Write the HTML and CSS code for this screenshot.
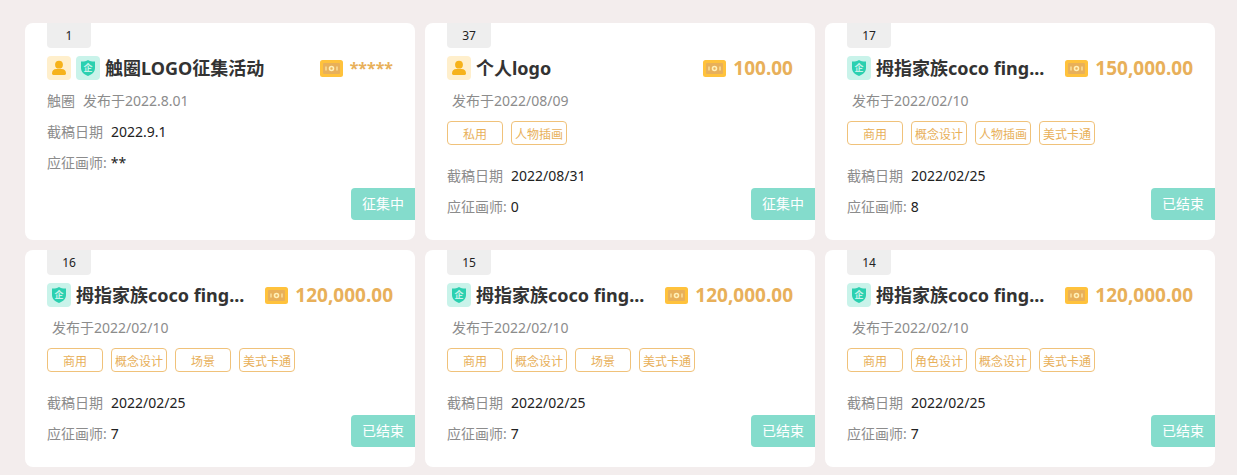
FILE: index.html
```html
<!DOCTYPE html>
<html lang="zh-CN">
<head>
    <meta charset="UTF-8">
    <meta name="viewport" content="width=device-width, initial-scale=1.0">
    <title>征集活动</title>
    <link rel="stylesheet" href="styles.css">
</head>
<body>
    <!-- shared icons -->
    <svg class="sprite" aria-hidden="true">
        <symbol id="icon-person" viewBox="0 0 24 24">
            <rect width="24" height="24" rx="4" fill="#ffefcc"/>
            <circle cx="12" cy="8.7" r="3.9" fill="#f6b21b"/>
            <path d="M5 17.6c0-3 1.6-4.6 4.4-4.6h5.2c2.8 0 4.4 1.6 4.4 4.6 0 .9-.5 1.4-1.4 1.4H6.4c-.9 0-1.4-.5-1.4-1.4z" fill="#f6b21b"/>
        </symbol>
        <symbol id="icon-shield" viewBox="0 0 24 24">
            <rect width="24" height="24" rx="4" fill="#c9f3ea"/>
            <path d="M12 4c2 1.3 4.4 1.6 7 1.5V12c0 3.600-2.600 6.400-7 8-4.400-1.600-7-4.400-7-8V5.500C7.600 5.600 10 5.300 12 4z" fill="#2bd0b0"/>
        </symbol>
        <symbol id="icon-money" viewBox="0 0 23 17">
            <rect width="23" height="17" rx="2.5" fill="#ffc23c"/>
            <rect x="3" y="3" width="17" height="11" rx="1" fill="#e8b05a"/>
            <circle cx="11.5" cy="8.5" r="2" fill="none" stroke="#fff0b8" stroke-width="1.600"/>
            <path d="M6 6.500v4M17 6.500v4" stroke="#fbe3a0" stroke-width="1.400"/>
        </symbol>
    </svg>

    <main class="list">
        <article class="card">
            <span class="number">1</span>
            <div class="head">
                <svg class="icon"><use href="#icon-person"/></svg>
                <svg class="icon"><use href="#icon-shield"/><text x="12" y="15">企</text></svg>
                <h3 class="title">触圈LOGO征集活动</h3>
                <svg class="money"><use href="#icon-money"/></svg>
                <span class="price masked">*****</span>
            </div>
            <p class="line publish"><span>触圈</span><span>发布于2022.8.01</span></p>
            <p class="line date"><span>截稿日期</span><b>2022.9.1</b></p>
            <p class="line"><span>应征画师:</span><b>**</b></p>
            <span class="status">征集中</span>
        </article>

        <article class="card">
            <span class="number">37</span>
            <div class="head">
                <svg class="icon"><use href="#icon-person"/></svg>
                <h3 class="title">个人logo</h3>
                <svg class="money"><use href="#icon-money"/></svg>
                <span class="price">100.00</span>
            </div>
            <p class="line publish"><span class="time">发布于2022/08/09</span></p>
            <ul class="tags">
                <li>私用</li>
                <li>人物插画</li>
            </ul>
            <p class="line date"><span>截稿日期</span><b>2022/08/31</b></p>
            <p class="line"><span>应征画师:</span><b>0</b></p>
            <span class="status">征集中</span>
        </article>

        <article class="card">
            <span class="number">17</span>
            <div class="head">
                <svg class="icon"><use href="#icon-shield"/><text x="12" y="15">企</text></svg>
                <h3 class="title">拇指家族coco fing...</h3>
                <svg class="money"><use href="#icon-money"/></svg>
                <span class="price">150,000.00</span>
            </div>
            <p class="line publish"><span class="time">发布于2022/02/10</span></p>
            <ul class="tags">
                <li>商用</li>
                <li>概念设计</li>
                <li>人物插画</li>
                <li>美式卡通</li>
            </ul>
            <p class="line date"><span>截稿日期</span><b>2022/02/25</b></p>
            <p class="line"><span>应征画师:</span><b>8</b></p>
            <span class="status">已结束</span>
        </article>

        <article class="card">
            <span class="number">16</span>
            <div class="head">
                <svg class="icon"><use href="#icon-shield"/><text x="12" y="15">企</text></svg>
                <h3 class="title">拇指家族coco fing...</h3>
                <svg class="money"><use href="#icon-money"/></svg>
                <span class="price">120,000.00</span>
            </div>
            <p class="line publish"><span class="time">发布于2022/02/10</span></p>
            <ul class="tags">
                <li>商用</li>
                <li>概念设计</li>
                <li>场景</li>
                <li>美式卡通</li>
            </ul>
            <p class="line date"><span>截稿日期</span><b>2022/02/25</b></p>
            <p class="line"><span>应征画师:</span><b>7</b></p>
            <span class="status">已结束</span>
        </article>

        <article class="card">
            <span class="number">15</span>
            <div class="head">
                <svg class="icon"><use href="#icon-shield"/><text x="12" y="15">企</text></svg>
                <h3 class="title">拇指家族coco fing...</h3>
                <svg class="money"><use href="#icon-money"/></svg>
                <span class="price">120,000.00</span>
            </div>
            <p class="line publish"><span class="time">发布于2022/02/10</span></p>
            <ul class="tags">
                <li>商用</li>
                <li>概念设计</li>
                <li>场景</li>
                <li>美式卡通</li>
            </ul>
            <p class="line date"><span>截稿日期</span><b>2022/02/25</b></p>
            <p class="line"><span>应征画师:</span><b>7</b></p>
            <span class="status">已结束</span>
        </article>

        <article class="card">
            <span class="number">14</span>
            <div class="head">
                <svg class="icon"><use href="#icon-shield"/><text x="12" y="15">企</text></svg>
                <h3 class="title">拇指家族coco fing...</h3>
                <svg class="money"><use href="#icon-money"/></svg>
                <span class="price">120,000.00</span>
            </div>
            <p class="line publish"><span class="time">发布于2022/02/10</span></p>
            <ul class="tags">
                <li>商用</li>
                <li>角色设计</li>
                <li>概念设计</li>
                <li>美式卡通</li>
            </ul>
            <p class="line date"><span>截稿日期</span><b>2022/02/25</b></p>
            <p class="line"><span>应征画师:</span><b>7</b></p>
            <span class="status">已结束</span>
        </article>
    </main>
</body>
</html>
```
FILE: styles.css
```css
* {
    box-sizing: border-box;
}

body {
    margin: 0;
    background-color: #f3eded;
    color: #222;
    font-family: "Noto Sans", "Noto Sans CJK SC", sans-serif;
    font-size: 14px;
}

h3,
p,
ul {
    margin: 0;
    padding: 0;
}

.sprite {
    position: absolute;
    width: 0;
    height: 0;
}

.list {
    display: grid;
    grid-template-columns: repeat(3, 1fr);
    gap: 10px;
    padding: 23px 22px 8px 25px;
}

.card {
    position: relative;
    padding: 0 22px 18px;
    background-color: #fff;
    border-radius: 8px;
}

.number {
    display: block;
    width: 44px;
    background-color: #eee;
    border-radius: 0 0 4px 4px;
    font-size: 12px;
    line-height: 25px;
    text-align: center;
}

/* title row */
.head {
    display: flex;
    align-items: center;
    gap: 5px;
    height: 24px;
    margin: 8px 0 5px;
}

.icon {
    flex: none;
    width: 24px;
    height: 24px;
}

.icon text {
    fill: #c9f3ea;
    font-size: 9px;
    font-weight: bold;
    text-anchor: middle;
}

.title {
    flex: 1;
    color: #333;
    font-size: 18px;
    line-height: 24px;
    white-space: nowrap;
}

.money {
    flex: none;
    width: 23px;
    height: 17px;
    margin-right: 2px;
}

.price {
    color: #e8b05a;
    font-size: 19px;
    font-weight: bold;
    line-height: 24px;
}

.masked {
    font-size: 16px;
}

.line {
    display: flex;
    gap: 4px;
    color: #8c8c8c;
    line-height: 31px;
}

.line b {
    color: #222;
    font-weight: normal;
}

.date,
.publish {
    gap: 8px;
}

.time {
    margin-left: 5px;
}

.tags {
    display: flex;
    gap: 8px;
    margin: 5px 0 15px;
    list-style: none;
}

.tags li {
    width: 56px;
    height: 24px;
    padding-top: 1px;
    border: 1px solid #f0c27a;
    border-radius: 4px;
    color: #e8b05a;
    font-size: 12px;
    line-height: 24px;
    text-align: center;
    white-space: nowrap;
}

/* status label sits on the card's right edge */
.status {
    position: absolute;
    right: 0;
    bottom: 20px;
    width: 64px;
    background-color: #84dccc;
    border-radius: 4px 0 0 4px;
    color: #fff;
    line-height: 32px;
    text-align: center;
}
```
